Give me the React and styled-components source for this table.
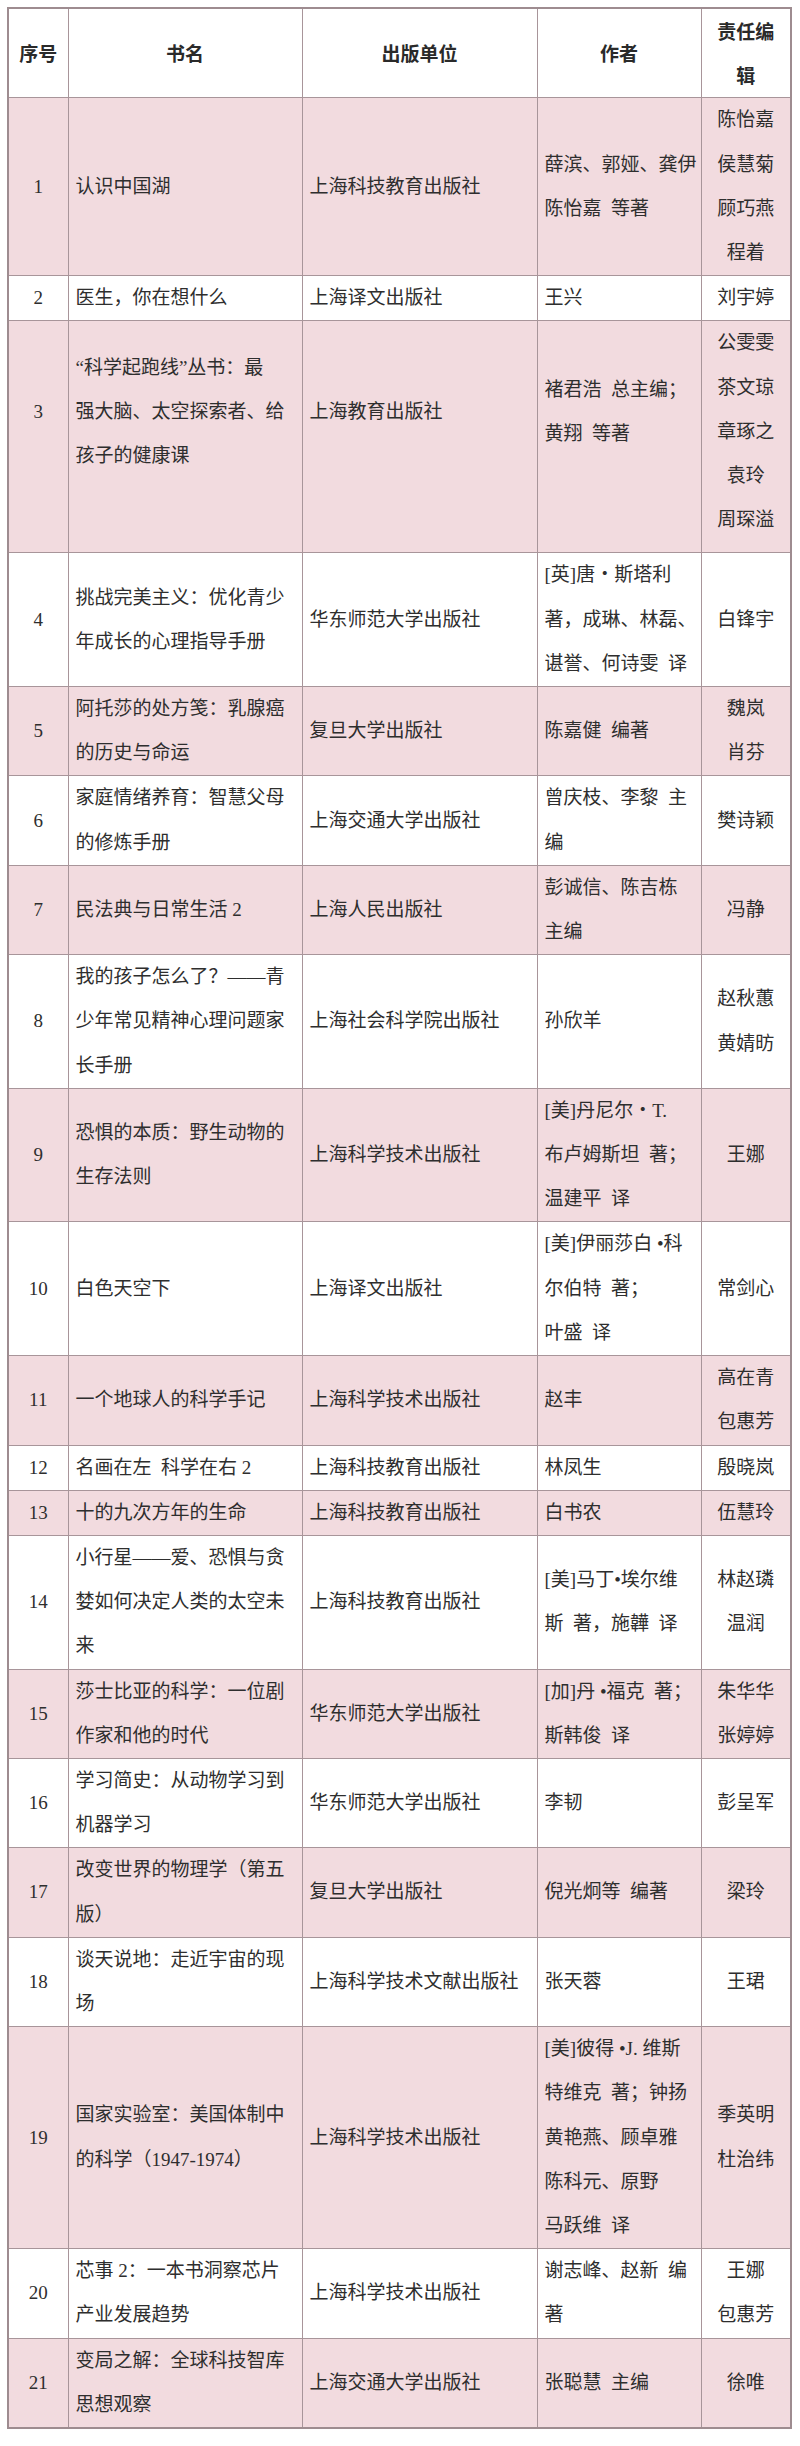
import styled, { createGlobalStyle } from "styled-components";

const GlobalStyle = createGlobalStyle`
  html, body {
    margin: 0;
    padding: 0;
    background: #ffffff;
  }
  body {
    font-family: "Liberation Serif", "Noto Sans CJK SC", serif;
    color: #2e2e2e;
  }
`;

const Page = styled.div`
  width: 800px;
  padding: 7px 10px 23px 7px;
  box-sizing: border-box;
`;

const Table = styled.table`
  width: 783px;
  border-collapse: collapse;
  table-layout: fixed;
  border: 2px solid #9e8c90;
`;

const Row = styled.tr`
  background: ${(p) => (p.$pink ? "#f2dbdf" : "#ffffff")};
`;

const HeadCell = styled.th`
  border: 1px solid #a8959a;
  padding: 0 4px;
  font-family: "Noto Sans CJK SC", sans-serif;
  font-weight: 700;
  font-size: 19px;
  color: #2a2a2a;
  text-align: center;
  vertical-align: middle;
`;

const Cell = styled.td`
  border: 1px solid #a8959a;
  padding: 0 ${(p) => (p.$center ? "4px" : "7px")} ${(p) => p.$lift || 0}px;
  font-size: 19px;
  text-align: ${(p) => (p.$center ? "center" : "left")};
  vertical-align: middle;
`;

const Line = styled.div`
  line-height: 44.2px;
  white-space: pre;
`;

const rows = [
  {
    title: ["认识中国湖"],
    pub: ["上海科技教育出版社"],
    author: ["薛滨、郭娅、龚伊", "陈怡嘉  等著"],
    editor: ["陈怡嘉", "侯慧菊", "顾巧燕", "程着"],
  },
  { title: ["医生，你在想什么"], pub: ["上海译文出版社"], author: ["王兴"], editor: ["刘宇婷"] },
  {
    title: ["“科学起跑线”丛书：最", "强大脑、太空探索者、给", "孩子的健康课"],
    pub: ["上海教育出版社"],
    author: ["褚君浩  总主编；", "黄翔  等著"],
    editor: ["公雯雯", "茶文琼", "章琢之", "袁玲", "周琛溢"],
    lift: 50,
    editorPad: 10,
  },
  {
    title: ["挑战完美主义：优化青少", "年成长的心理指导手册"],
    pub: ["华东师范大学出版社"],
    author: ["[英]唐・斯塔利", "著，成琳、林磊、", "谌誉、何诗雯  译"],
    editor: ["白锋宇"],
  },
  {
    title: ["阿托莎的处方笺：乳腺癌", "的历史与命运"],
    pub: ["复旦大学出版社"],
    author: ["陈嘉健  编著"],
    editor: ["魏岚", "肖芬"],
  },
  {
    title: ["家庭情绪养育：智慧父母", "的修炼手册"],
    pub: ["上海交通大学出版社"],
    author: ["曾庆枝、李黎  主", "编"],
    editor: ["樊诗颖"],
  },
  {
    title: ["民法典与日常生活 2"],
    pub: ["上海人民出版社"],
    author: ["彭诚信、陈吉栋", "主编"],
    editor: ["冯静"],
  },
  {
    title: ["我的孩子怎么了？——青", "少年常见精神心理问题家", "长手册"],
    pub: ["上海社会科学院出版社"],
    author: ["孙欣羊"],
    editor: ["赵秋蕙", "黄婧昉"],
  },
  {
    title: ["恐惧的本质：野生动物的", "生存法则"],
    pub: ["上海科学技术出版社"],
    author: ["[美]丹尼尔・T.", "布卢姆斯坦  著；", "温建平  译"],
    editor: ["王娜"],
  },
  {
    title: ["白色天空下"],
    pub: ["上海译文出版社"],
    author: ["[美]伊丽莎白 •科", "尔伯特  著；", "叶盛  译"],
    editor: ["常剑心"],
  },
  {
    title: ["一个地球人的科学手记"],
    pub: ["上海科学技术出版社"],
    author: ["赵丰"],
    editor: ["高在青", "包惠芳"],
  },
  { title: ["名画在左  科学在右 2"], pub: ["上海科技教育出版社"], author: ["林凤生"], editor: ["殷晓岚"] },
  { title: ["十的九次方年的生命"], pub: ["上海科技教育出版社"], author: ["白书农"], editor: ["伍慧玲"] },
  {
    title: ["小行星——爱、恐惧与贪", "婪如何决定人类的太空未", "来"],
    pub: ["上海科技教育出版社"],
    author: ["[美]马丁•埃尔维", "斯  著，施韡  译"],
    editor: ["林赵璘", "温润"],
  },
  {
    title: ["莎士比亚的科学：一位剧", "作家和他的时代"],
    pub: ["华东师范大学出版社"],
    author: ["[加]丹 •福克  著；", "斯韩俊  译"],
    editor: ["朱华华", "张婷婷"],
  },
  {
    title: ["学习简史：从动物学习到", "机器学习"],
    pub: ["华东师范大学出版社"],
    author: ["李韧"],
    editor: ["彭呈军"],
  },
  {
    title: ["改变世界的物理学（第五", "版）"],
    pub: ["复旦大学出版社"],
    author: ["倪光炯等  编著"],
    editor: ["梁玲"],
  },
  {
    title: ["谈天说地：走近宇宙的现", "场"],
    pub: ["上海科学技术文献出版社"],
    author: ["张天蓉"],
    editor: ["王珺"],
  },
  {
    title: ["国家实验室：美国体制中", "的科学（1947-1974）"],
    pub: ["上海科学技术出版社"],
    author: ["[美]彼得 •J. 维斯", "特维克  著；钟扬", "黄艳燕、顾卓雅", "陈科元、原野", "马跃维  译"],
    editor: ["季英明", "杜治纬"],
  },
  {
    title: ["芯事 2：一本书洞察芯片", "产业发展趋势"],
    pub: ["上海科学技术出版社"],
    author: ["谢志峰、赵新  编", "著"],
    editor: ["王娜", "包惠芳"],
  },
  {
    title: ["变局之解：全球科技智库", "思想观察"],
    pub: ["上海交通大学出版社"],
    author: ["张聪慧  主编"],
    editor: ["徐唯"],
  },
];

const Lines = ({ items }) => items.map((t, i) => <Line key={i}>{t}</Line>);

export default function App() {
  return (
    <Page>
      <GlobalStyle />
      <Table>
        <colgroup>
          <col style={{ width: 60 }} />
          <col style={{ width: 234 }} />
          <col style={{ width: 235 }} />
          <col style={{ width: 164 }} />
          <col style={{ width: 90 }} />
        </colgroup>
        <thead>
          <Row>
            <HeadCell>
              <Line>序号</Line>
            </HeadCell>
            <HeadCell>
              <Line>书名</Line>
            </HeadCell>
            <HeadCell>
              <Line>出版单位</Line>
            </HeadCell>
            <HeadCell>
              <Line>作者</Line>
            </HeadCell>
            <HeadCell>
              <Line>责任编</Line>
              <Line>辑</Line>
            </HeadCell>
          </Row>
        </thead>
        <tbody>
          {rows.map((r, i) => (
            <Row key={i} $pink={i % 2 === 0}>
              <Cell $center $lift={r.lift}>
                <Line>{i + 1}</Line>
              </Cell>
              <Cell $lift={r.lift}>
                <Lines items={r.title} />
              </Cell>
              <Cell $lift={r.lift}>
                <Lines items={r.pub} />
              </Cell>
              <Cell $lift={r.lift}>
                <Lines items={r.author} />
              </Cell>
              <Cell $center $lift={r.editorPad}>
                <Lines items={r.editor} />
              </Cell>
            </Row>
          ))}
        </tbody>
      </Table>
    </Page>
  );
}
